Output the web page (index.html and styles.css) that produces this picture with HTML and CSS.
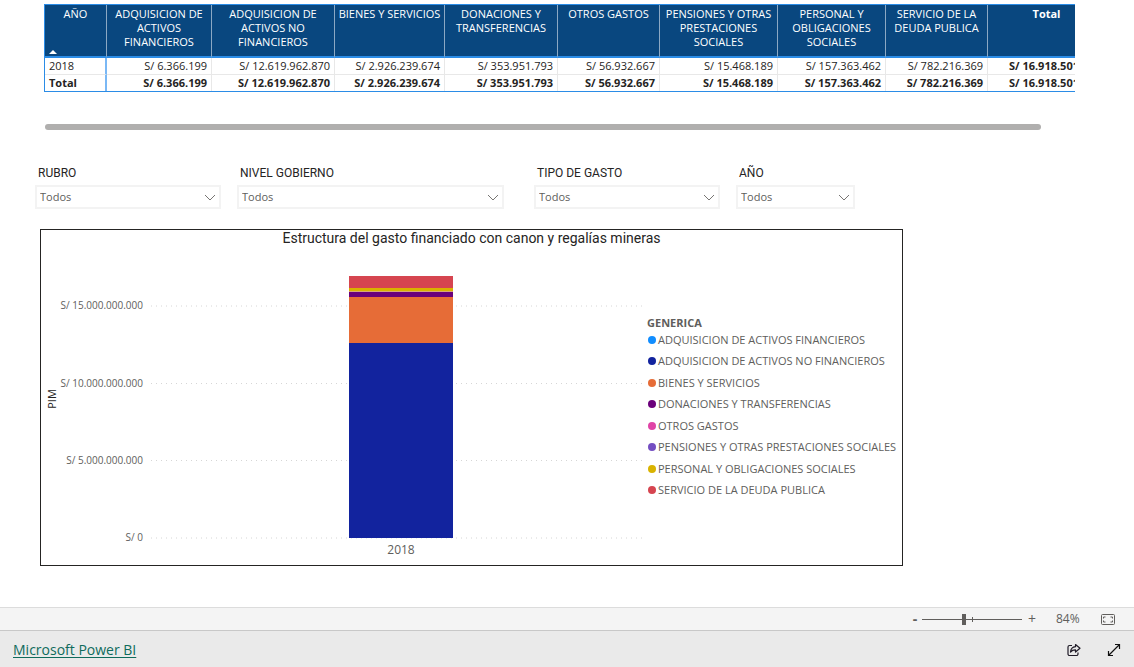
FILE: index.html
```html
<!DOCTYPE html>
<html lang="es">
<head>
<meta charset="utf-8">
<title>Canon y regalías mineras</title>
<link rel="stylesheet" href="styles.css">
</head>
<body>
<main class="report">
  <div class="matrix">
    <table class="matrix-table">
      <colgroup>
        <col class="w-year"><col class="w-105"><col class="w-123"><col class="w-110"><col class="w-113"><col class="w-102"><col class="w-118"><col class="w-108"><col class="w-102"><col class="w-118">
      </colgroup>
      <thead>
        <tr>
          <th scope="col">AÑO<svg class="sort" viewBox="0 0 8 4" aria-hidden="true"><path d="M0 4 4 0l4 4z"/></svg></th>
          <th scope="col">ADQUISICION DE ACTIVOS FINANCIEROS</th>
          <th scope="col">ADQUISICION DE ACTIVOS NO FINANCIEROS</th>
          <th scope="col">BIENES Y SERVICIOS</th>
          <th scope="col">DONACIONES Y TRANSFERENCIAS</th>
          <th scope="col">OTROS GASTOS</th>
          <th scope="col">PENSIONES Y OTRAS PRESTACIONES SOCIALES</th>
          <th scope="col">PERSONAL Y OBLIGACIONES SOCIALES</th>
          <th scope="col">SERVICIO DE LA DEUDA PUBLICA</th>
          <th scope="col" class="total">Total</th>
        </tr>
      </thead>
      <tbody>
        <tr><th scope="row">2018</th><td>S/ 6.366.199</td><td>S/ 12.619.962.870</td><td>S/ 2.926.239.674</td><td>S/ 353.951.793</td><td>S/ 56.932.667</td><td>S/ 15.468.189</td><td>S/ 157.363.462</td><td>S/ 782.216.369</td><td class="total">S/ 16.918.501.223</td></tr>
        <tr class="total"><th scope="row">Total</th><td>S/ 6.366.199</td><td>S/ 12.619.962.870</td><td>S/ 2.926.239.674</td><td>S/ 353.951.793</td><td>S/ 56.932.667</td><td>S/ 15.468.189</td><td>S/ 157.363.462</td><td>S/ 782.216.369</td><td>S/ 16.918.501.223</td></tr>
      </tbody>
    </table>
    <div class="scroll-thumb"></div>
  </div>

  <form class="slicers">
    <div class="slicer">
      <label for="rubro">RUBRO</label>
      <div class="picker"><select id="rubro"><option>Todos</option></select><svg class="chevron" viewBox="0 0 12 8" aria-hidden="true"><path d="M1 1l5 5 5-5"/></svg></div>
    </div>
    <div class="slicer wide">
      <label for="nivel">NIVEL GOBIERNO</label>
      <div class="picker"><select id="nivel"><option>Todos</option></select><svg class="chevron" viewBox="0 0 12 8" aria-hidden="true"><path d="M1 1l5 5 5-5"/></svg></div>
    </div>
    <div class="slicer">
      <label for="tipo">TIPO DE GASTO</label>
      <div class="picker"><select id="tipo"><option>Todos</option></select><svg class="chevron" viewBox="0 0 12 8" aria-hidden="true"><path d="M1 1l5 5 5-5"/></svg></div>
    </div>
    <div class="slicer">
      <label for="anio">AÑO</label>
      <div class="picker"><select id="anio"><option>Todos</option></select><svg class="chevron" viewBox="0 0 12 8" aria-hidden="true"><path d="M1 1l5 5 5-5"/></svg></div>
    </div>
  </form>

  <section class="chart">
    <h2>Estructura del gasto financiado con canon y regalías mineras</h2>
    <div class="chart-body">
      <svg class="plot" viewBox="0 0 605 316" role="img" aria-label="PIM por año y genérica">
        <g class="grid-lines">
          <path d="M110 57h495M110 134.500h495M110 211.500h495M110 289h495"/>
        </g>
        <g class="ticks">
          <text x="102" y="60">S/ 15.000.000.000</text>
          <text x="102" y="138">S/ 10.000.000.000</text>
          <text x="102" y="215">S/ 5.000.000.000</text>
          <text x="102" y="292">S/ 0</text>
        </g>
        <text class="axis-title" transform="translate(15 150) rotate(-90)">PIM</text>
        <rect x="307" y="27" width="106" height="262" fill="#fff"/>
        <rect x="308" y="27" width="104" height="12" fill="#d64550"/>
        <rect x="308" y="39" width="104" height="3" fill="#d9b300"/>
        <rect x="308" y="42" width="104" height="1" fill="#d9a67a"/>
        <rect x="308" y="43" width="104" height="5" fill="#6b007b"/>
        <rect x="308" y="48" width="104" height="46" fill="#e66c37"/>
        <rect x="308" y="94" width="104" height="195" fill="#12239e"/>
        <text class="category" x="360" y="305">2018</text>
      </svg>
      <div class="legend">
        <h3>GENERICA</h3>
        <ul>
          <li><i class="dot c1"></i>ADQUISICION DE ACTIVOS FINANCIEROS</li>
          <li><i class="dot c2"></i>ADQUISICION DE ACTIVOS NO FINANCIEROS</li>
          <li><i class="dot c3"></i>BIENES Y SERVICIOS</li>
          <li><i class="dot c4"></i>DONACIONES Y TRANSFERENCIAS</li>
          <li><i class="dot c5"></i>OTROS GASTOS</li>
          <li><i class="dot c6"></i>PENSIONES Y OTRAS PRESTACIONES SOCIALES</li>
          <li><i class="dot c7"></i>PERSONAL Y OBLIGACIONES SOCIALES</li>
          <li><i class="dot c8"></i>SERVICIO DE LA DEUDA PUBLICA</li>
        </ul>
      </div>
    </div>
  </section>
</main>

<div class="zoom-bar">
  <button type="button" class="step">-</button>
  <input class="zoom" type="range" min="0" max="100" value="42" aria-label="Zoom">
  <button type="button" class="step">+</button>
  <output class="percent">84%</output>
  <button type="button" class="icon-button" aria-label="Ajustar a la página">
    <svg width="14" height="11" viewBox="0 0 14 11" fill="none" stroke="#605e5c"><rect x=".5" y=".5" width="13" height="10" rx="1"/><path d="M4.500 3h-2v1.500M9.500 3h2v1.500M4.500 8h-2V6.500M9.500 8h2V6.500"/></svg>
  </button>
</div>

<footer class="footer">
  <a href="#">Microsoft Power BI</a>
  <div class="actions">
    <button type="button" class="icon-button" aria-label="Compartir">
      <svg width="14" height="14" viewBox="0 0 14 14" fill="none" stroke="#201c28" stroke-width="1.200" stroke-linejoin="round"><path d="M5 2.500H2.500A1.500 1.500 0 0 0 1 4v7a1.500 1.500 0 0 0 1.500 1.500h7A1.500 1.500 0 0 0 11 11V9.500"/><path d="M8.500 1.500 13 5.200 8.500 9V6.800C6.200 6.700 4.800 7.400 3.500 9 3.800 6 5.500 3.900 8.500 3.700z"/></svg>
    </button>
    <button type="button" class="icon-button" aria-label="Pantalla completa">
      <svg width="14" height="14" viewBox="0 0 14 14" fill="none" stroke="#111" stroke-width="1.200"><path d="M1.500 12.500l11-11M8 1.500h4.500V6M1.500 8v4.500H6"/></svg>
    </button>
  </div>
</footer>
</body>
</html>
```
FILE: styles.css
```css
* { box-sizing: border-box; }

body {
  margin: 0;
  min-height: 100vh;
  display: flex;
  flex-direction: column;
  background: #fff;
  color: #252423;
  font: 11px/14px "Open Sans", "Noto Sans", sans-serif;
}

button {
  border: 0;
  padding: 0;
  background: none;
  color: inherit;
  font: inherit;
}

.report {
  flex: 1;
  padding: 4px 0 32px;
}

/* Matrix */
.matrix {
  margin: 0 59px 0 44px;
  overflow: hidden;
}

.matrix-table {
  width: 1061px;
  table-layout: fixed;
  border-collapse: separate;
  border-spacing: 0;
  border: 1px solid #2b8ce6;
}

.w-year { width: 62px; }
.w-102 { width: 102px; }
.w-105 { width: 105px; }
.w-108 { width: 108px; }
.w-110 { width: 110px; }
.w-113 { width: 113px; }
.w-118 { width: 118px; }
.w-123 { width: 123px; }

.matrix-table thead th {
  position: relative;
  height: 53px;
  padding: 2px 3px 6px;
  vertical-align: top;
  background: #09477f;
  color: #fff;
  font-weight: 400;
  border-right: 1px solid #8ba8c4;
  border-bottom: 2px solid #2b8ce6;
}

.matrix-table thead .total { font-weight: 700; }

.sort {
  position: absolute;
  left: 4px;
  bottom: 2px;
  width: 8px;
  height: 4px;
  fill: #fff;
}

.matrix-table tbody th,
.matrix-table td {
  padding: 1px 4px;
  text-align: right;
  font-weight: 400;
  white-space: nowrap;
  border-right: 1px solid #e8e8e8;
  border-bottom: 1px solid #e8e8e8;
}

.matrix-table tbody th {
  text-align: left;
  border-right: 2px solid #7ab8f5;
}

.matrix-table tbody .total th,
.matrix-table tbody .total td,
.matrix-table td.total { font-weight: 700; }

.matrix-table tbody .total th,
.matrix-table tbody .total td { border-bottom: 0; }

.scroll-thumb {
  height: 6px;
  margin: 32px 34px 0 1px;
  border-radius: 3px;
  background: #b0afae;
}

/* Slicers */
.slicers {
  display: grid;
  grid-template-columns: 202fr 297fr 202fr 119fr;
  margin: 35px 279px 0 35px;
}

.slicer { padding-right: 16px; }
.slicer.wide { padding-right: 30px; }
.slicer:last-child { padding-right: 0; }

.slicer label {
  display: block;
  padding: 0 3px;
  line-height: 16px;
  font-family: Roboto, sans-serif;
  font-size: 12px;
}

.picker {
  position: relative;
  margin-top: 4px;
}

.picker select {
  display: block;
  width: 100%;
  height: 24px;
  padding: 0 24px 0 3px;
  appearance: none;
  border: 2px solid #f3f3f3;
  border-radius: 0;
  background: #fff;
  color: #605e5c;
  font: inherit;
}

.chevron {
  position: absolute;
  right: 5px;
  top: 9px;
  width: 12px;
  height: 8px;
  fill: none;
  stroke: #777573;
  pointer-events: none;
}

/* Chart */
.chart {
  margin: 20px 231px 0 40px;
  border: 1px solid #252423;
}

.chart h2 {
  margin: 0;
  padding-bottom: 2px;
  text-align: center;
  font: 400 14px/17px Roboto, sans-serif;
}

.chart-body {
  display: flex;
}

.plot {
  flex: 1;
  min-width: 0;
  display: block;
}

.grid-lines path {
  stroke: #d6d6d6;
  stroke-dasharray: 1 4;
}

.ticks text {
  fill: #605e5c;
  font-size: 10px;
  text-anchor: end;
}

.axis-title {
  fill: #252423;
  font-size: 11px;
  text-anchor: middle;
}

.category {
  fill: #605e5c;
  font-size: 12px;
  text-anchor: middle;
}

.legend {
  width: 256px;
  padding: 67px 0 0 1px;
  color: #605e5c;
  white-space: nowrap;
}

.legend h3 {
  margin: 0 0 3px;
  font-size: 11px;
  line-height: 14px;
}

.legend ul {
  display: flex;
  flex-direction: column;
  justify-content: space-between;
  min-height: 164px;
  margin: 0;
  padding: 0;
  list-style: none;
}

.legend li {
  display: flex;
  align-items: center;
  gap: 2px;
  padding-left: 1px;
}

.dot {
  width: 8px;
  height: 8px;
  border-radius: 50%;
}

.c1 { background: #118dff; }
.c2 { background: #12239e; }
.c3 { background: #e66c37; }
.c4 { background: #6b007b; }
.c5 { background: #e044a7; }
.c6 { background: #744ec2; }
.c7 { background: #d9b300; }
.c8 { background: #d64550; }

/* Zoom bar */
.zoom-bar {
  display: flex;
  align-items: center;
  justify-content: flex-end;
  height: 23px;
  padding-right: 19px;
  border-top: 1px solid #dcdcdc;
  background: #f4f4f4;
  color: #605e5c;
  font-size: 12px;
}

.step {
  width: 8px;
  font-size: 14px;
  font-weight: 700;
}

.step + .zoom + .step { font-weight: 400; }

.zoom {
  width: 100px;
  height: 12px;
  margin: 0 6px 0 3px;
  appearance: none;
  background:
    linear-gradient(#605e5c, #605e5c) 50px 50% / 1px 5px no-repeat,
    linear-gradient(#605e5c, #605e5c) 0 50% / 100% 1px no-repeat;
}

.zoom::-webkit-slider-thumb {
  appearance: none;
  width: 4px;
  height: 11px;
  background: #605e5c;
}

.percent {
  width: 65px;
  padding-left: 20px;
}

.icon-button {
  display: flex;
}

/* Footer */
.footer {
  display: flex;
  align-items: center;
  justify-content: space-between;
  height: 37px;
  padding: 2px 13px 0;
  border-top: 1px solid #c8c8c8;
  background: #eaeaea;
}

.footer a {
  color: #0f6b5c;
  font-size: 14px;
  line-height: 18px;
  text-underline-offset: 2px;
}

.actions {
  display: flex;
  gap: 26px;
}
```
